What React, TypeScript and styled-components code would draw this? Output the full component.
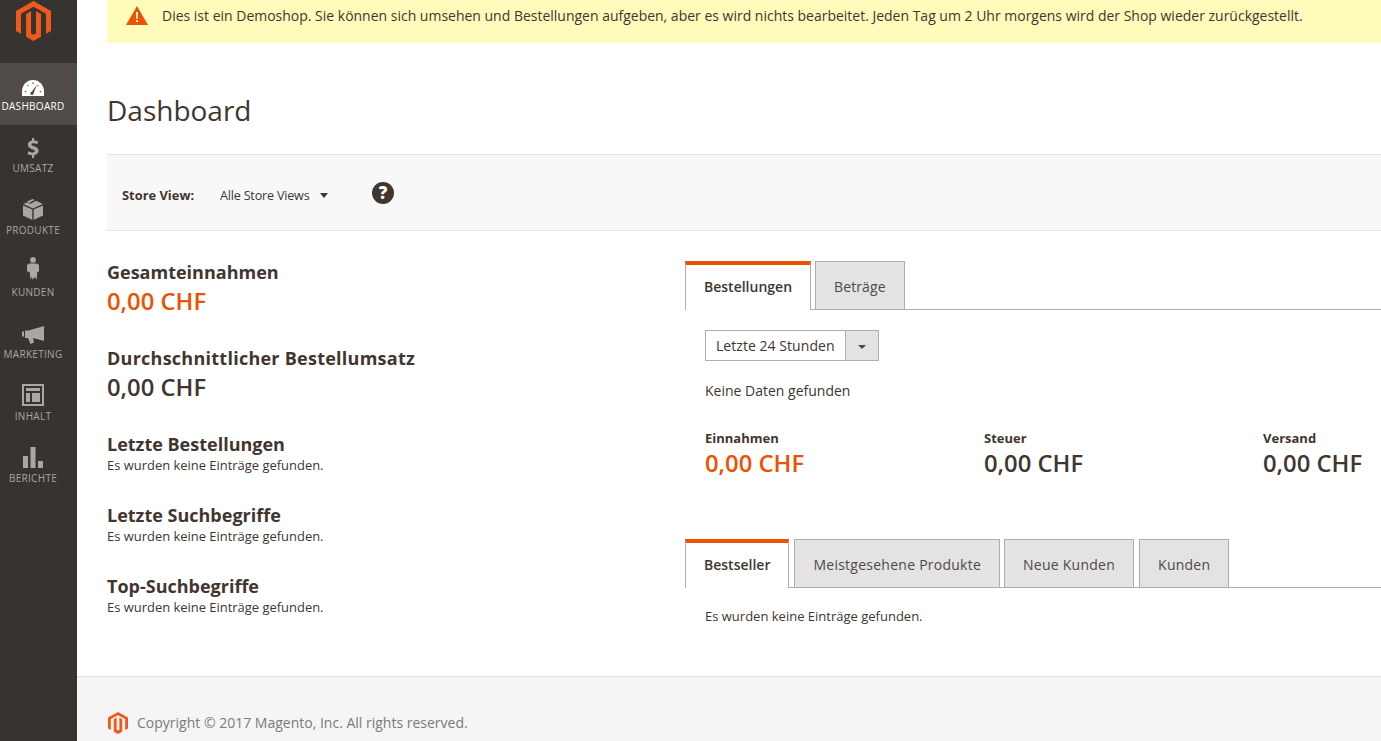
import React from "react";
import styled, { createGlobalStyle } from "styled-components";

const Global = createGlobalStyle`
  html, body { margin: 0; padding: 0; height: 741px; overflow: hidden; background: #fff; }
  body { font-family: "Open Sans", "Liberation Sans", sans-serif; color: #41362f; font-size: 14px; }
  * { box-sizing: border-box; }
`;

const Page = styled.div`
  display: flex;
  width: 1381px;
  height: 741px;
  overflow: hidden;
`;
const Sidebar = styled.nav`
  width: 77px;
  flex: none;
  background: #373330;
  display: flex;
  flex-direction: column;
  padding-right: 11px;
`;
const LogoBox = styled.div`
  height: 63px;
  display: flex;
  justify-content: center;
  padding-top: 1px;
`;
const NavItem = styled.div<{ $active?: boolean }>`
  height: 62px;
  margin-right: -11px;
  padding: 9px 11px 0 0;
  display: flex;
  flex-direction: column;
  align-items: center;
  background: ${(p) => (p.$active ? "#514c48" : "transparent")};
  color: ${(p) => (p.$active ? "#ffffff" : "#aaa6a0")};
`;
const NavIcon = styled.div`
  height: 24px;
  display: flex;
  align-items: flex-end;
  justify-content: center;
`;
const NavLabel = styled.span`
  font-size: 10px;
  line-height: 12px;
  margin-top: 4px;
  letter-spacing: 0.3px;
  white-space: nowrap;
`;
const Main = styled.main`
  flex: 1;
  min-width: 0;
  display: flex;
  flex-direction: column;
`;
const Content = styled.div`
  padding-left: 30px;
  height: 676px;
`;
const Notice = styled.div`
  height: 43px;
  background: #fffbbb;
  display: flex;
  align-items: flex-start;
  padding: 6px 0 0 19px;
  gap: 14px;
  font-size: 13.99px;
  line-height: 20px;
  white-space: nowrap;
`;
const Title = styled.h1`
  margin: 46px 0 0;
  height: 65px;
  font-size: 28px;
  line-height: 42px;
  font-weight: 400;
  color: #41362f;
`;
const StoreBar = styled.div`
  height: 77px;
  background: #f8f8f8;
  border-top: 1px solid #e3e3e3;
  border-bottom: 1px solid #e3e3e3;
  display: flex;
  align-items: center;
  padding-left: 15px;
`;
const StoreLabel = styled.span`
  font-weight: 700;
  font-size: 12.9px;
  line-height: 18px;
  width: 98px;
  padding-top: 4px;
`;
const StoreValue = styled.span`
  font-size: 12.6px;
  line-height: 18px;
  letter-spacing: -0.2px;
  width: 152px;
  padding-top: 6px;
  display: flex;
  align-items: center;
  gap: 11px;
`;
const Caret = styled.i`
  display: block;
  width: 0;
  height: 0;
  border-left: 4.5px solid transparent;
  border-right: 4.5px solid transparent;
  border-top: 5px solid #41362f;
`;
const SmallCaret = styled(Caret)`
  border-left-width: 4px;
  border-right-width: 4px;
  border-top: 4px solid #514943;
  margin-top: 2px;
`;
const Help = styled.span`
  width: 22px;
  height: 22px;
  border-radius: 50%;
  background: #41362f;
  color: #fff;
  font-weight: 800;
  font-size: 17px;
  line-height: 22px;
  text-align: center;
`;
const Columns = styled.div`
  display: flex;
  padding-top: 30px;
`;
const LeftCol = styled.div`
  width: 578px;
  flex: none;
`;
const RightCol = styled.div`
  flex: 1;
  min-width: 0;
`;
const Metric = styled.div`
  height: 86px;
`;
const H3 = styled.div<{ $wide?: boolean }>`
  font-size: 18px;
  font-weight: 700;
  line-height: 22px;
  letter-spacing: ${(p) => (p.$wide ? "0.25px" : "0")};
  color: #41362f;
`;
const Big = styled.div<{ $accent?: boolean }>`
  font-size: 23.8px;
  font-weight: 600;
  line-height: 36px;
  color: ${(p) => (p.$accent ? "#eb5202" : "#41362f")};
`;
const ListBlock = styled.div`
  height: 71px;
`;
const Small = styled.div`
  font-size: 12.95px;
  line-height: 16px;
  margin-top: 2px;
`;
const Tabs = styled.div`
  display: flex;
  align-items: flex-end;
  height: 49px;
  border-bottom: 1px solid #adadad;
`;
const Tab = styled.div<{ $active?: boolean; $wide?: boolean; $gap?: number }>`
  height: 49px;
  padding: 0 ${(p) => (p.$active ? 18 : 18)}px 0 18px;
  margin-left: ${(p) => p.$gap ?? 0}px;
  margin-bottom: -1px;
  font-size: 14px;
  line-height: ${(p) => (p.$active ? 44 : 49)}px;
  letter-spacing: ${(p) => (p.$active ? "0" : p.$wide ? "0.25px" : "0.1px")};
  background: ${(p) => (p.$active ? "#fff" : "#e3e3e3")};
  border: 1px solid #adadad;
  border-bottom: ${(p) => (p.$active ? "none" : "1px solid #adadad")};
  border-top: ${(p) => (p.$active ? "4px solid #eb5202" : "1px solid #adadad")};
  font-weight: ${(p) => (p.$active ? 600 : 400)};
  color: ${(p) => (p.$active ? "#41362f" : "#514943")};
`;
const Pane = styled.div`
  padding: 20px 0 0 20px;
`;
const Select = styled.div`
  display: flex;
  width: 174px;
  height: 31px;
  border: 1px solid #adadad;
  font-size: 14px;
`;
const SelectText = styled.span`
  flex: 1;
  padding-left: 10px;
  line-height: 29px;
  letter-spacing: 0.05px;
`;
const SelectBtn = styled.span`
  width: 33px;
  background: #e3e3e3;
  border-left: 1px solid #adadad;
  display: flex;
  align-items: center;
  justify-content: center;
`;
const NoData = styled.div`
  font-size: 14px;
  line-height: 20px;
  margin-top: 20px;
`;
const Stats = styled.div`
  display: grid;
  grid-template-columns: 279px 279px 1fr;
  margin-top: 28px;
  height: 110px;
`;
const StatLabel = styled.div`
  font-size: 13px;
  font-weight: 700;
  line-height: 18px;
`;
const StatValue = styled(Big)`
  line-height: 32px;
`;
const BottomText = styled.div`
  padding: 19px 0 0 20px;
  font-size: 13px;
  line-height: 18px;
`;
const Footer = styled.footer`
  flex: 1;
  background: #f5f5f5;
  border-top: 1px solid #e3e3e3;
  display: flex;
  align-items: flex-start;
  padding: 35px 0 0 31px;
  gap: 9px;
  font-size: 14px;
  line-height: 22px;
  color: #7a7a7a;
`;

const MagentoLogo = ({ w, h }: { w: number; h: number }) => (
  <svg width={w} height={h} viewBox="0 0 24 28" preserveAspectRatio="none">
    <path fill="#ee5a1c" d="M12 0 0 7v14l3.4 2V9l8.6-5 8.6 5v14l3.4-2V7z" />
    <path fill="#ee5a1c" d="M6.9 9.1 10.300 7v15.600l1.700 1 1.700-1V7l3.400 2.100V25L12 28l-5.100-3z" />
  </svg>
);

const icons: Record<string, React.ReactNode> = {
  gauge: (
    <svg width="22" height="16" viewBox="0 0 22 16" fill="currentColor">
      <path d="M11 0C4.800 0 0 4.900 0 11.500V16h22v-4.500C22 4.900 17.200 0 11 0z" />
      <path fill="#514c48" d="M11.700 13.100 15 4.800 9.700 11.700a1.700 1.700 0 1 0 2 1.400zM2.800 11h1.400v1.200H2.800zM17.800 11h1.400v1.200h-1.400zM5.200 5.500l.9-.8.700.9-.9.800zM10.400 2.500h1.200v1.500h-1.200zM15.900 4.900l.9.800-.8.900-.9-.8z" />
    </svg>
  ),
  dollar: (
    <svg width="12" height="20" viewBox="0 0 12 21" fill="currentColor">
      <path d="M5 0h2.200v2.600c1.600.1 3 .5 4.200 1.100l-.9 2.900c-1.300-.6-2.700-1-4-1-1.300 0-2.100.4-2.100 1.200 0 .8.800 1.200 2.700 1.900 3.200 1 4.800 2.300 4.800 4.700 0 2.300-1.700 4-4.700 4.400V21H5v-2.900c-1.800-.1-3.600-.6-4.800-1.300l.9-3c1.300.7 3 1.300 4.500 1.300 1.400 0 2.300-.5 2.300-1.400 0-.8-.8-1.300-2.600-1.900C2.700 10.900.6 9.700.6 7.100.6 4.800 2.200 3.100 5 2.600z" />
    </svg>
  ),
  box: (
    <svg width="20" height="21" viewBox="0 0 20 21" fill="currentColor">
      <path d="M0 6.500 9.300 10.500V21L0 16.500zM20 6.500 10.700 10.500V21L20 16.500zM3.800 2.800 9.500 0l2.200 1-5.800 2.900zM7.500 4.700 13.200 1.800 19.800 5 10 9.400.3 5 3.500 3.400z" />
    </svg>
  ),
  person: (
    <svg width="12" height="25" viewBox="0 0 12 25" fill="currentColor">
      <circle cx="6" cy="2.900" r="2.900" />
      <path d="M2.600 6.500h6.800c1.500 0 2.600 1 2.600 2.500v5.500l-1.800.8-.5 7.200L7.300 20 6 23l-1.300-3-1.400 2.500-.5-7.200L1 14.500H0V9c0-1.500 1.100-2.500 2.600-2.500z" />
      <path fill="none" d="M0 23h12v2H0z" />
    </svg>
  ),
  megaphone: (
    <svg width="22" height="18" viewBox="0 0 22 18" fill="currentColor">
      <path d="M0 5.500h2v5H0zM3 4.500h3.500L22 0v15l-11-3 1 4.500-3.500 1.500L6 12H3z" />
    </svg>
  ),
  layout: (
    <svg width="22" height="22" viewBox="0 0 22 22" fill="currentColor">
      <path fillRule="evenodd" d="M0 0h22v22H0zM2 2v18h18V2z" />
      <path d="M4 4h14v3H4zM4 9h4v9H4zM10 9h8v9h-8z" />
    </svg>
  ),
  bars: (
    <svg width="20" height="21" viewBox="0 0 20 21" fill="currentColor">
      <path d="M0 9h5v12H0zM7.500 0h5v21h-5zM15 14h5v7h-5z" />
    </svg>
  ),
};

const nav = [
  ["gauge", "DASHBOARD"],
  ["dollar", "UMSATZ"],
  ["box", "PRODUKTE"],
  ["person", "KUNDEN"],
  ["megaphone", "MARKETING"],
  ["layout", "INHALT"],
  ["bars", "BERICHTE"],
];

export default function App() {
  return (
    <Page>
      <Global />
      <Sidebar>
        <LogoBox>
          <MagentoLogo w={35} h={40} />
        </LogoBox>
        {nav.map(([icon, label], i) => (
          <NavItem key={label} $active={i === 0}>
            <NavIcon>{icons[icon]}</NavIcon>
            <NavLabel>{label}</NavLabel>
          </NavItem>
        ))}
      </Sidebar>
      <Main>
        <Content>
          <Notice>
            <svg width="22" height="19" viewBox="0 0 22 19">
              <path fill="#eb5202" d="M11 0 22 19H0z" />
              <path fill="#fff" d="M10 6h2l-.3 7h-1.400zM10 14.300h2V16h-2z" />
            </svg>
            Dies ist ein Demoshop. Sie können sich umsehen und Bestellungen aufgeben, aber es wird nichts bearbeitet. Jeden Tag um 2 Uhr morgens wird der Shop wieder zurückgestellt.
          </Notice>
          <Title>Dashboard</Title>
          <StoreBar>
            <StoreLabel>Store View:</StoreLabel>
            <StoreValue>
              Alle Store Views <Caret />
            </StoreValue>
            <Help>?</Help>
          </StoreBar>
          <Columns>
            <LeftCol>
              <Metric>
                <H3>Gesamteinnahmen</H3>
                <Big $accent>0,00 CHF</Big>
              </Metric>
              <Metric>
                <H3 $wide>Durchschnittlicher Bestellumsatz</H3>
                <Big>0,00 CHF</Big>
              </Metric>
              <ListBlock>
                <H3>Letzte Bestellungen</H3>
                <Small>Es wurden keine Einträge gefunden.</Small>
              </ListBlock>
              <ListBlock>
                <H3>Letzte Suchbegriffe</H3>
                <Small>Es wurden keine Einträge gefunden.</Small>
              </ListBlock>
              <ListBlock>
                <H3>Top-Suchbegriffe</H3>
                <Small>Es wurden keine Einträge gefunden.</Small>
              </ListBlock>
            </LeftCol>
            <RightCol>
              <Tabs>
                <Tab $active>Bestellungen</Tab>
                <Tab $gap={4}>Beträge</Tab>
              </Tabs>
              <Pane>
                <Select>
                  <SelectText>Letzte 24 Stunden</SelectText>
                  <SelectBtn>
                    <SmallCaret />
                  </SelectBtn>
                </Select>
                <NoData>Keine Daten gefunden</NoData>
                <Stats>
                  <div>
                    <StatLabel>Einnahmen</StatLabel>
                    <StatValue $accent>0,00 CHF</StatValue>
                  </div>
                  <div>
                    <StatLabel>Steuer</StatLabel>
                    <StatValue>0,00 CHF</StatValue>
                  </div>
                  <div>
                    <StatLabel>Versand</StatLabel>
                    <StatValue>0,00 CHF</StatValue>
                  </div>
                </Stats>
              </Pane>
              <Tabs>
                <Tab $active>Bestseller</Tab>
                <Tab $wide $gap={5}>Meistgesehene Produkte</Tab>
                <Tab $wide $gap={4}>Neue Kunden</Tab>
                <Tab $wide $gap={5}>Kunden</Tab>
              </Tabs>
              <BottomText>Es wurden keine Einträge gefunden.</BottomText>
            </RightCol>
          </Columns>
        </Content>
        <Footer>
          <MagentoLogo w={20} h={22} />
          Copyright © 2017 Magento, Inc. All rights reserved.
        </Footer>
      </Main>
    </Page>
  );
}
